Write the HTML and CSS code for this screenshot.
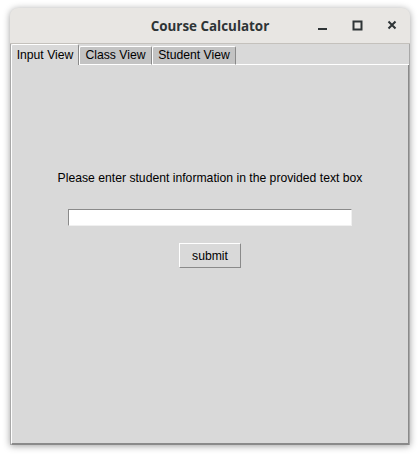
FILE: index.html
```html
<!DOCTYPE html>
<html>
<head>
<meta charset="utf-8">
<link rel="stylesheet" href="styles.css">
</head>
<body>
<div class="window">
  <div class="titlebar">
    <span class="title">Course Calculator</span>
    <div class="controls">
      <svg class="ctl" width="12" height="12" viewBox="0 0 12 12"><rect x="2" y="8" width="9" height="2" fill="#2e3436"/></svg>
      <svg class="ctl" width="12" height="12" viewBox="0 0 12 12"><rect x="2" y="2" width="8" height="8" fill="none" stroke="#2e3436" stroke-width="2" transform="translate(0.5 -0.5)"/></svg>
      <svg class="ctl" width="12" height="12" viewBox="0 0 12 12"><path d="M2.5 1.5 L9.5 8.5 M9.5 1.5 L2.5 8.5" stroke="#2e3436" stroke-width="2" fill="none"/></svg>
    </div>
  </div>
  <div class="notebook">
    <div class="tabs">
      <div class="tab active">Input View</div>
      <div class="tab t-class">Class View</div>
      <div class="tab t-student">Student View</div>
      <div class="filler"></div>
    </div>
    <div class="panel">
      <div class="label">Please enter student information in the provided text box</div>
      <input class="entry" type="text">
      <button class="btn">submit</button>
    </div>
  </div>
</div>
</body>
</html>
```
FILE: styles.css
```css
html, body {
  margin: 0;
  padding: 0;
  background: #ffffff;
}
body {
  width: 420px;
  height: 455px;
  overflow: hidden;
  font-family: "Liberation Sans", Arial, sans-serif;
}
.window {
  margin: 8px 10px 0;
  width: 400px;
  height: 437px;
  border-radius: 8px 8px 0 0;
  box-shadow: 0 1px 7px rgba(0, 0, 0, 0.38);
  display: flex;
  flex-direction: column;
  overflow: hidden;
  background: #d9d9d9;
}
.titlebar {
  height: 35px;
  background: #e8e6e3;
  border-bottom: 1px solid #c4c1bc;
  position: relative;
  display: flex;
  align-items: center;
  justify-content: center;
  flex: none;
}
.title {
  font-family: "Open Sans", "Noto Sans", sans-serif;
  font-weight: 700;
  font-size: 13.4px;
  color: #2e3436;
  margin-top: 1px;
}
.controls {
  position: absolute;
  right: 12px;
  top: 12px;
  display: flex;
  gap: 23px;
}
.ctl {
  display: block;
}
.notebook {
  flex: 1;
  display: flex;
  flex-direction: column;
  border-left: 1px solid #a8a8a8;
  border-right: 1px solid #a8a8a8;
}
.tabs {
  height: 21px;
  display: flex;
  align-items: flex-end;
  flex: none;
}
.tab {
  box-sizing: border-box;
  height: 19px;
  font-size: 12.2px;
  line-height: 17px;
  color: #000;
  background: #c3c3c3;
  border-top: 1px solid #ffffff;
  border-left: 1px solid #ffffff;
  border-right: 1px solid #8a8a8a;
  border-bottom: 1px solid #ffffff;
  border-radius: 2px 2px 0 0;
  text-align: center;
  white-space: nowrap;
}
.tab.active {
  height: 21px;
  width: 68px;
  background: #d9d9d9;
  border-bottom: none;
  line-height: 19px;
  padding-top: 1px;
}
.t-class {
  width: 73px;
}
.t-student {
  width: 84px;
}
.filler {
  flex: 1;
  height: 1px;
  background: #ffffff;
}
.panel {
  flex: 1;
  border-left: 1px solid #ffffff;
  border-right: 1px solid #8a8a8a;
  border-bottom: 2px solid #8a8a8a;
  display: flex;
  flex-direction: column;
  align-items: center;
  padding-top: 106px;
  box-sizing: border-box;
}
.label {
  font-size: 12.2px;
  line-height: 14px;
  color: #000;
}
.entry {
  margin-top: 24px;
  box-sizing: border-box;
  width: 284px;
  height: 17px;
  padding: 0;
  background: #ffffff;
  border-top: 1px solid #8a8a8a;
  border-left: 1px solid #8a8a8a;
  border-right: 1px solid #f0f0f0;
  border-bottom: 1px solid #f0f0f0;
  outline: none;
}
.btn {
  margin-top: 17px;
  box-sizing: border-box;
  width: 62px;
  height: 25px;
  padding: 0;
  font-family: "Liberation Sans", Arial, sans-serif;
  font-size: 12.2px;
  color: #000;
  background: #d9d9d9;
  border-top: 1px solid #ffffff;
  border-left: 1px solid #ffffff;
  border-right: 1px solid #8a8a8a;
  border-bottom: 1px solid #8a8a8a;
  border-radius: 0;
}
```
